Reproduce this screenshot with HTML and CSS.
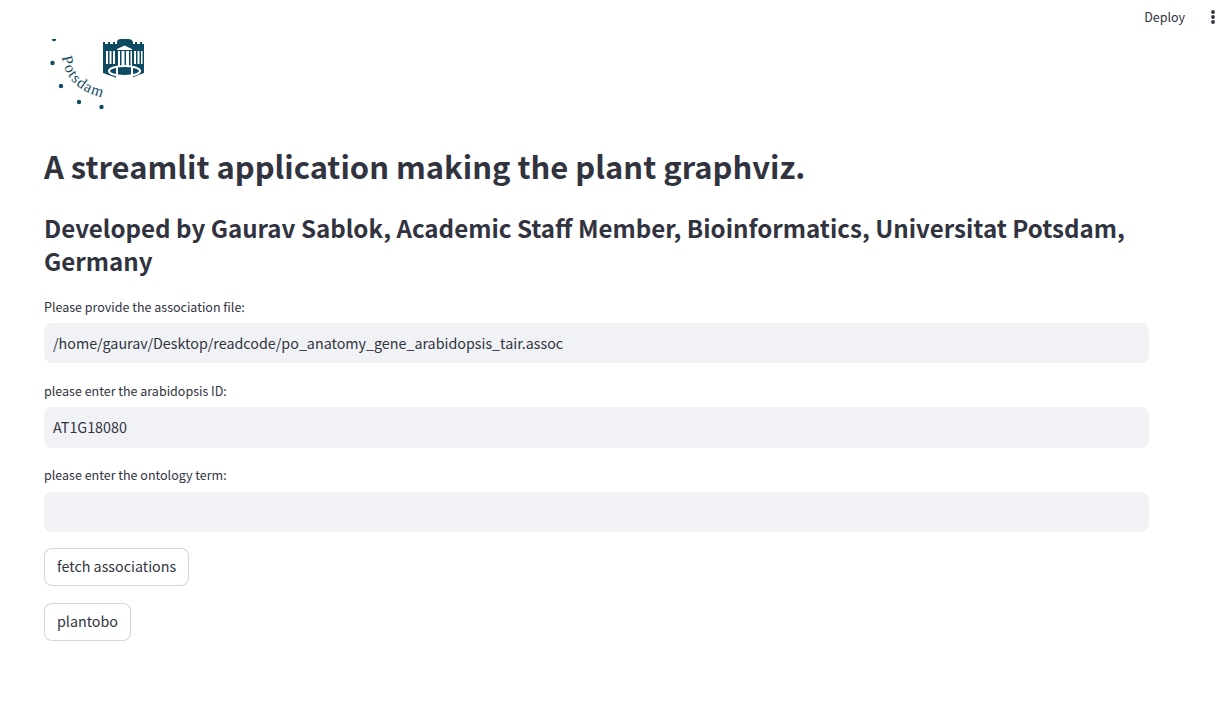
FILE: index.html
```html
<!DOCTYPE html>
<html lang="en">
<head>
<meta charset="utf-8">
<title>Plant graphviz</title>
<link rel="stylesheet" href="styles.css">
</head>
<body>
<header class="toolbar">
  <span class="deploy">Deploy</span>
  <svg class="kebab" width="16" height="16" viewBox="0 0 16 16" aria-hidden="true"><circle cx="8" cy="3" r="1.9"/><circle cx="8" cy="8" r="1.9"/><circle cx="8" cy="13" r="1.9"/></svg>
</header>
<main class="main">
  <svg class="logo" width="101" height="72" viewBox="0 0 101 72" role="img" aria-label="Universität Potsdam logo">
    <defs><path id="arc" d="M18 18Q23 54 68 60"/></defs>
    <g class="logo-dark">
      <circle cx="10" cy="0" r="2.200"/>
      <circle cx="8.500" cy="24" r="2.200"/>
      <circle cx="17" cy="47" r="2.200"/>
      <circle cx="35" cy="63" r="2.200"/>
      <circle cx="57.500" cy="68" r="2.200"/>
      <path d="M59 3h2v2h3V3h2v2h3V3h2v2h2V3Q73 0 77 0h7q4 0 5 3v2h2V3h2v2h3V3h2v2h2v29L87 39V36H73v3L59 34z"/>
    </g>
    <g class="logo-light">
      <path d="M62 12h2v13h-2zM65.500 12h2v13h-2zM69 12h2v13h-2zM90 12h2v13h-2zM93.500 12h2v13h-2zM97 12h1.500v13H97z"/>
      <path d="M73 10l7.500-3.500L88 10v1H73z"/>
      <path d="M74 12h2v15h-2zM77.500 12h3v15h-3zM82 12h3v15h-3zM86.500 12h1.500v15h-1.500z"/>
    </g>
    <ellipse class="logo-ring" cx="80.500" cy="32" rx="15.500" ry="5"/>
    <path class="logo-light" d="M72 27h2v12h-2zM87 27h2v12h-2zM74 37h13v2H74z"/>
    <text class="logo-text"><textPath href="#arc">Potsdam</textPath></text>
  </svg>
  <h1 class="title">A streamlit application making the plant graphviz.</h1>
  <h2 class="subtitle">Developed by Gaurav Sablok, Academic Staff Member, Bioinformatics, Universitat Potsdam, Germany</h2>
  <div class="field">
    <label class="label" for="assoc">Please provide the association file:</label>
    <input class="input" id="assoc" value="/home/gaurav/Desktop/readcode/po_anatomy_gene_arabidopsis_tair.assoc">
  </div>
  <div class="field mid">
    <label class="label" for="gid">please enter the arabidopsis ID:</label>
    <input class="input" id="gid" value="AT1G18080">
  </div>
  <div class="field last">
    <label class="label" for="term">please enter the ontology term:</label>
    <input class="input" id="term" value="">
  </div>
  <button class="button">fetch associations</button>
  <button class="button">plantobo</button>
</main>
</body>
</html>
```
FILE: styles.css
```css
* { box-sizing: border-box; }
html, body { margin: 0; height: 100%; background: #fff; overflow: hidden; }
body {
  font-family: "Noto Sans CJK SC", "Noto Sans", sans-serif;
  color: #31333f;
}
.toolbar {
  display: flex;
  justify-content: flex-end;
  align-items: center;
  height: 34px;
  padding-right: 6px;
  gap: 20px;
}
.deploy { font-size: 12.500px; line-height: 16px; margin-top: -1px; }
.kebab { fill: #31333f; }
.main {
  width: 1105px;
  margin-left: 44px;
  display: flex;
  flex-direction: column;
  align-items: flex-start;
}
.logo { display: block; margin-top: 5px; }
.logo-dark { fill: #0f4a63; }
.logo-light { fill: #fff; }
.logo-ring { fill: #0f4a63; stroke: #fff; stroke-width: 2.200; }
.logo-text { font-family: "Liberation Serif", serif; font-size: 15.500px; letter-spacing: 1.200px; fill: #0f4a63; }
.title {
  margin: 35px 0 0;
  font-size: 30.950px;
  font-weight: 600;
  line-height: 40px;
}
.subtitle {
  margin: 25px 0 0;
  font-size: 24.120px;
  font-weight: 600;
  line-height: 33px;
}
.field { width: 100%; display: flex; flex-direction: column; margin-bottom: 18px; }
.subtitle + .field { margin-top: 20px; }
.field.mid { margin-bottom: 17px; }
.field.mid .input { height: 41px; }
.field.last { margin-bottom: 16px; }
.label { font-size: 12.500px; line-height: 20px; margin-bottom: 6px; }
.field.last .label { margin-bottom: 7px; }
.input {
  width: 100%;
  height: 40px;
  border: 0;
  border-radius: 8px;
  background: #f0f2f6;
  padding: 0 9px 2px;
  font: 400 14.300px "Noto Sans CJK SC", "Noto Sans", sans-serif;
  color: #31333f;
}
.button {
  height: 38px;
  padding: 0 12px 4px;
  background: #fff;
  border: 1px solid rgba(49, 51, 63, .2);
  border-radius: 8px;
  font: 400 14.300px "Noto Sans CJK SC", "Noto Sans", sans-serif;
  color: #31333f;
  margin-bottom: 17px;
}
```
